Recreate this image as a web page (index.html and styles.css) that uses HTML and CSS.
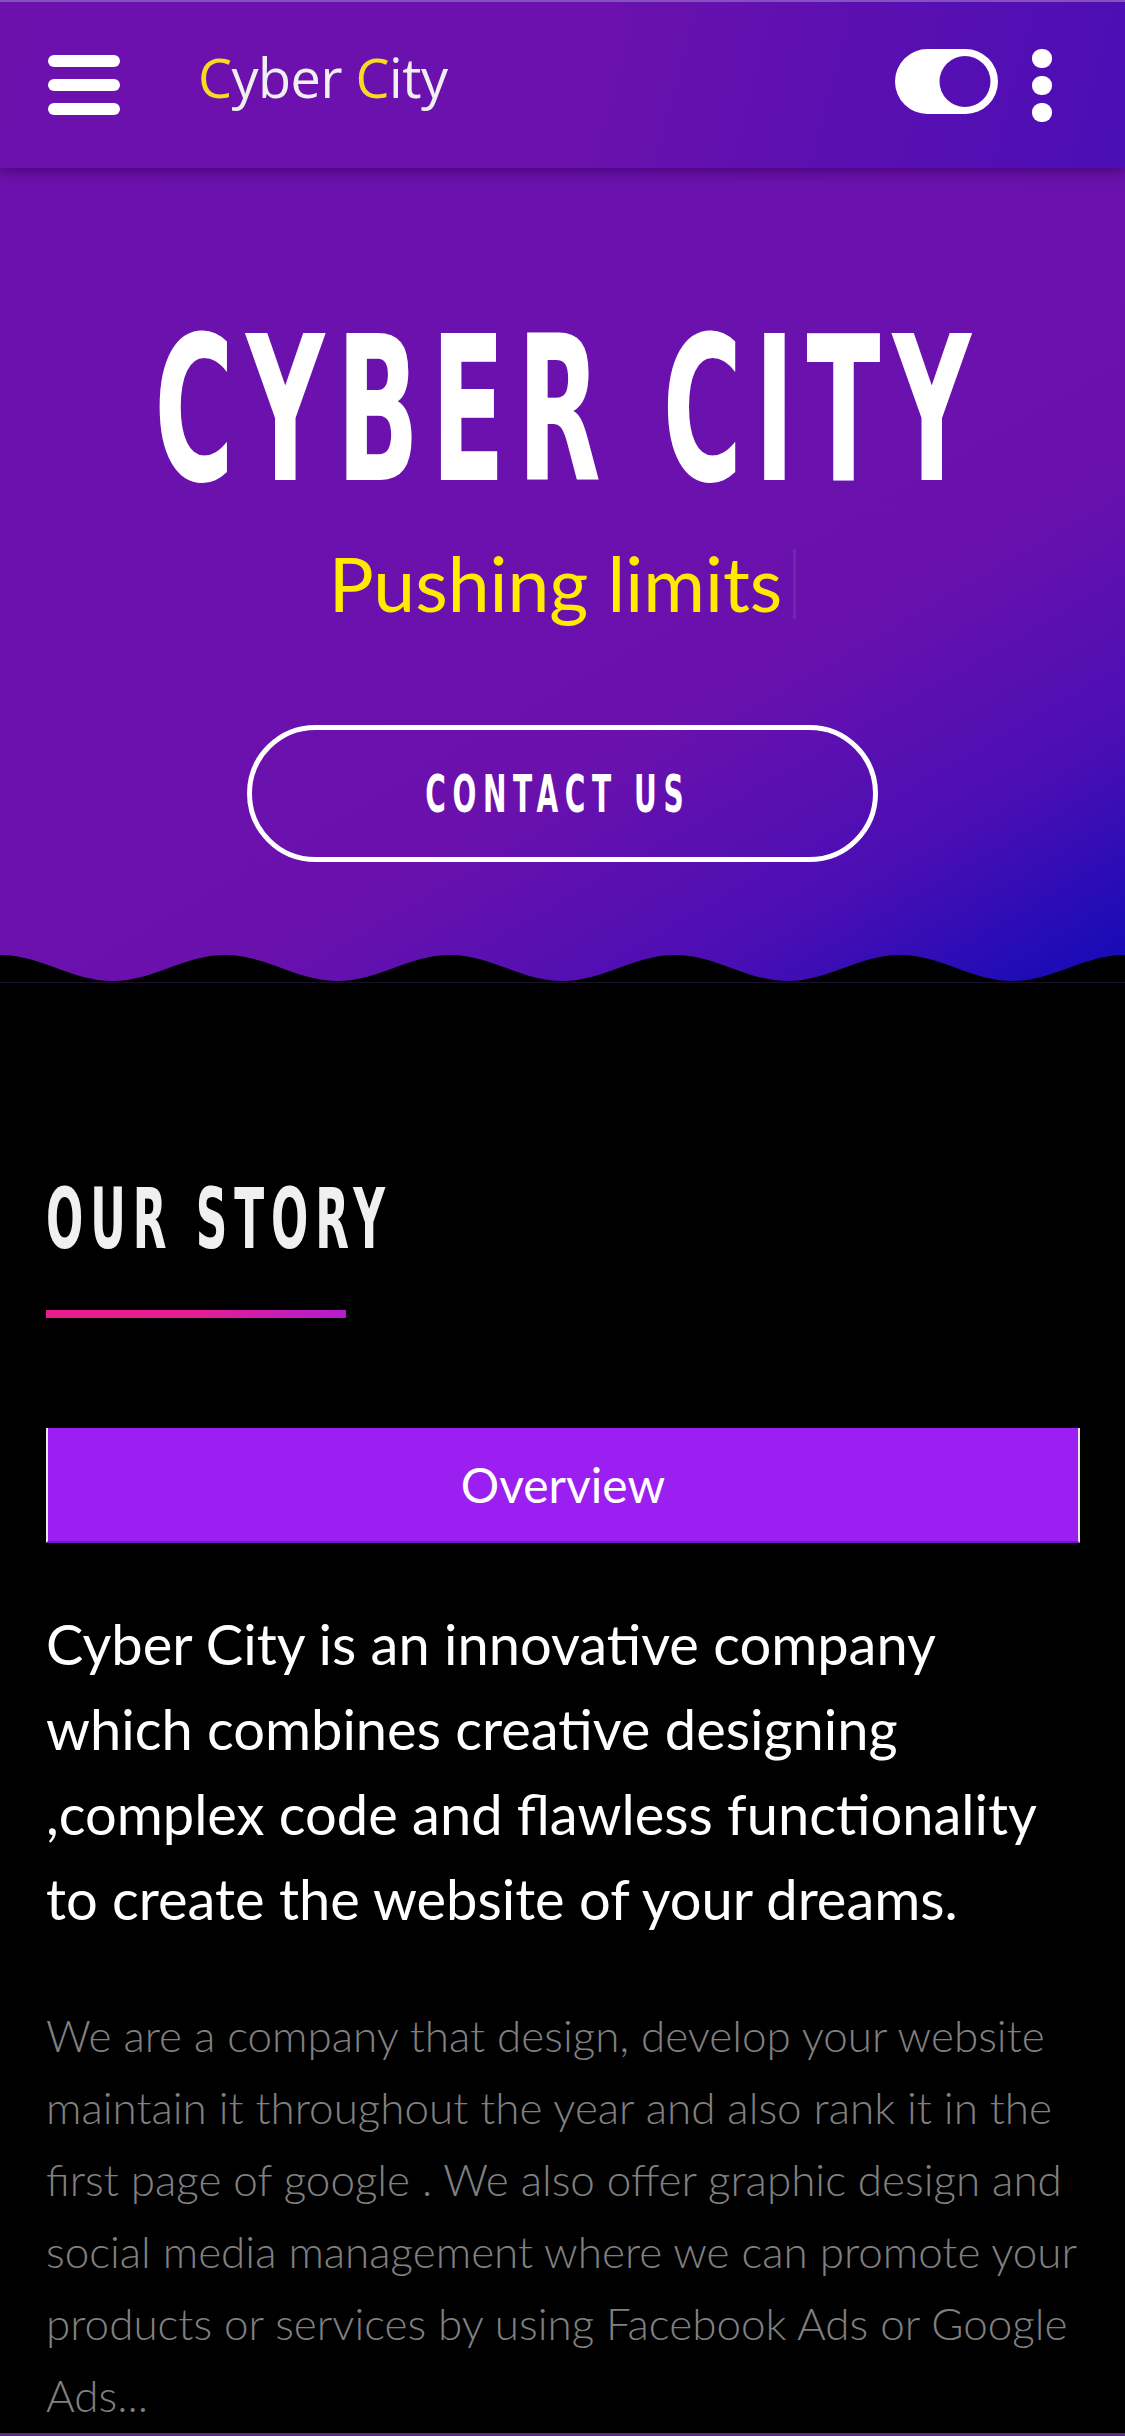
FILE: index.html
```html
<!DOCTYPE html>
<html lang="en">
<head>
<meta charset="utf-8">
<title>Cyber City</title>
<link rel="stylesheet" href="styles.css">
</head>
<body>
<header class="topbar">
  <button class="menu-btn" aria-label="Menu"><span></span><span></span><span></span></button>
  <a class="logo" href="#"><span class="logo-c">C</span>yber <span class="logo-c">C</span>ity</a>
  <div class="topbar-actions">
    <svg class="toggle" viewBox="0 0 103 65" aria-hidden="true">
      <path fill="#fff" fill-rule="evenodd" d="M32.5 0H70.5A32.5 32.5 0 0 1 70.5 65H32.5A32.5 32.5 0 0 1 32.5 0Z M44.5 32.5a25.5 25.5 0 1 0 51 0a25.5 25.5 0 1 0 -51 0Z"/>
    </svg>
    <span class="kebab"><i></i><i></i><i></i></span>
  </div>
</header>

<section class="hero">
  <h1 class="hero-title"><span class="squeeze">CYBER CITY</span></h1>
  <p class="hero-sub">Pushing limits<span class="cursor"></span></p>
  <a class="hero-btn" href="#"><span class="squeeze">CONTACT US</span></a>
  <svg class="wave" viewBox="0 0 1125 27" preserveAspectRatio="none" aria-hidden="true">
    <path fill="#000" d="M0 0 C41 0 71.5 26 112.5 26 S184 0 225 0 S296.5 26 337.5 26 S409 0 450 0 S521.5 26 562.5 26 S634 0 675 0 S746.5 26 787.5 26 S859 0 900 0 S971.5 26 1012.5 26 S1084 0 1125 0 V27 H0 Z"/>
  </svg>
</section>

<main class="story">
  <h2 class="story-title"><span class="squeeze">OUR STORY</span></h2>
  <div class="story-rule"></div>
  <div class="tab">Overview</div>
  <p class="lead">Cyber City is an innovative company which combines creative designing ,complex code and flawless functionality to create the website of your dreams.</p>
  <p class="body-text">We are a company that design, develop your website maintain it throughout the year and also rank it in the first page of google . We also offer graphic design and social media management where we can promote your products or services by using Facebook Ads or Google Ads...</p>
  <div class="next-edge"></div>
</main>
</body>
</html>
```

FILE: styles.css
```css
* { box-sizing: border-box; }

html, body {
  margin: 0;
  padding: 0;
}

body {
  width: 1125px;
  background: #000;
  font-family: Lato, "Open Sans", sans-serif;
  overflow-x: hidden;
}

/* ---------- top bar ---------- */
.topbar {
  height: 168px;
  display: flex;
  align-items: center;
  padding: 0 73px 0 48px;
  background: linear-gradient(105deg, #6d11ad 0%, #6b11ad 52%, #4a0eb5 100%);
  border-top: 2px solid #8550bf;
  box-shadow: 0 5px 10px rgba(55, 0, 95, 0.55);
  position: relative;
  z-index: 2;
}

.menu-btn {
  width: 72px;
  height: 60px;
  padding: 0;
  border: 0;
  background: none;
  display: flex;
  flex-direction: column;
  justify-content: space-between;
}

.menu-btn span {
  display: block;
  height: 12px;
  border-radius: 6px;
  background: #fff;
}

.logo {
  margin-left: 78px;
  margin-bottom: 16px;
  font-family: "Open Sans", Lato, sans-serif;
  font-size: 54px;
  line-height: 1;
  color: #f0f0f0;
  text-decoration: none;
  letter-spacing: -0.5px;
}

.logo-c { color: #f5dc1e; }

.topbar-actions {
  margin-left: auto;
  display: flex;
  align-items: center;
  gap: 34px;
}

.toggle {
  width: 103px;
  height: 65px;
  display: block;
  margin-bottom: 8px;
}

.kebab {
  display: flex;
  flex-direction: column;
  gap: 8px;
}

.kebab i {
  display: block;
  width: 20px;
  height: 19px;
  border-radius: 9px;
  background: #fff;
}

/* ---------- condensed display type ---------- */
.hero-title,
.hero-btn,
.story-title {
  font-family: "DejaVu Sans Condensed", "DejaVu Sans", sans-serif;
  font-weight: 700;
  line-height: 1;
}

.squeeze {
  display: inline-block;
  white-space: nowrap;
}

/* ---------- hero ---------- */
.hero {
  padding-top: 142px;
  display: flex;
  flex-direction: column;
  align-items: center;
  color: #fff;
  background: linear-gradient(150deg, #6c11ad 0%, #6a11ad 64%, #4a0eb4 83%, #100bb7 100%);
}

.hero-title {
  align-self: stretch;
  margin: 0;
  font-size: 201px;
  text-align: center;
}

.hero-title .squeeze {
  letter-spacing: 20px;
  margin: 0 -246px 0 -234px;
  transform: scaleX(0.6);
}

.hero-sub {
  margin: 35px 0 0;
  font-size: 75px;
  line-height: 1;
  color: #ffeb00;
  display: flex;
  align-items: center;
}

.cursor {
  display: inline-block;
  width: 3px;
  height: 70px;
  margin-left: 11px;
  background: rgba(120, 60, 170, 0.55);
}

.hero-btn {
  margin-top: 104px;
  width: 631px;
  height: 137px;
  border: 5px solid #fff;
  border-radius: 70px;
  display: flex;
  align-items: center;
  justify-content: center;
  color: #fff;
  text-decoration: none;
  font-size: 52px;
}

.hero-btn .squeeze {
  letter-spacing: 11px;
  margin-right: 10px;
  transform: scaleX(0.6);
}

.wave {
  display: block;
  width: 100%;
  height: 27px;
  margin-top: 93px;
}

/* ---------- story ---------- */
.story {
  padding: 194px 45px 0 46px;
  border-top: 1px solid #1c1128;
}

.story-title {
  margin: 0;
  font-size: 84px;
  color: #f0f0f0;
}

.story-title .squeeze {
  letter-spacing: 12px;
  transform: scaleX(0.58);
  transform-origin: left center;
}

.story-rule {
  margin-top: 49px;
  width: 300px;
  height: 8px;
  background: linear-gradient(90deg, #ec1c8c 0%, #e61d92 50%, #b21ccf 100%);
}

.tab {
  margin-top: 110px;
  height: 115px;
  background: #9b1ff0;
  border-left: 2px solid #e6e6e6;
  border-right: 2px solid #e6e6e6;
  border-bottom: 2px solid #7a16c6;
  display: flex;
  align-items: center;
  justify-content: center;
  color: #fff;
  font-size: 48px;
  line-height: 1;
}

.lead {
  margin: 58px 0 0;
  color: #fff;
  font-size: 56px;
  line-height: 85px;
}

.body-text {
  margin: 58px 0 0;
  color: #808080;
  font-weight: 300;
  font-size: 44px;
  line-height: 72px;
}

.next-edge {
  margin: 2px -45px 0 -46px;
  height: 3px;
  background: #5d2a85;
}
```
